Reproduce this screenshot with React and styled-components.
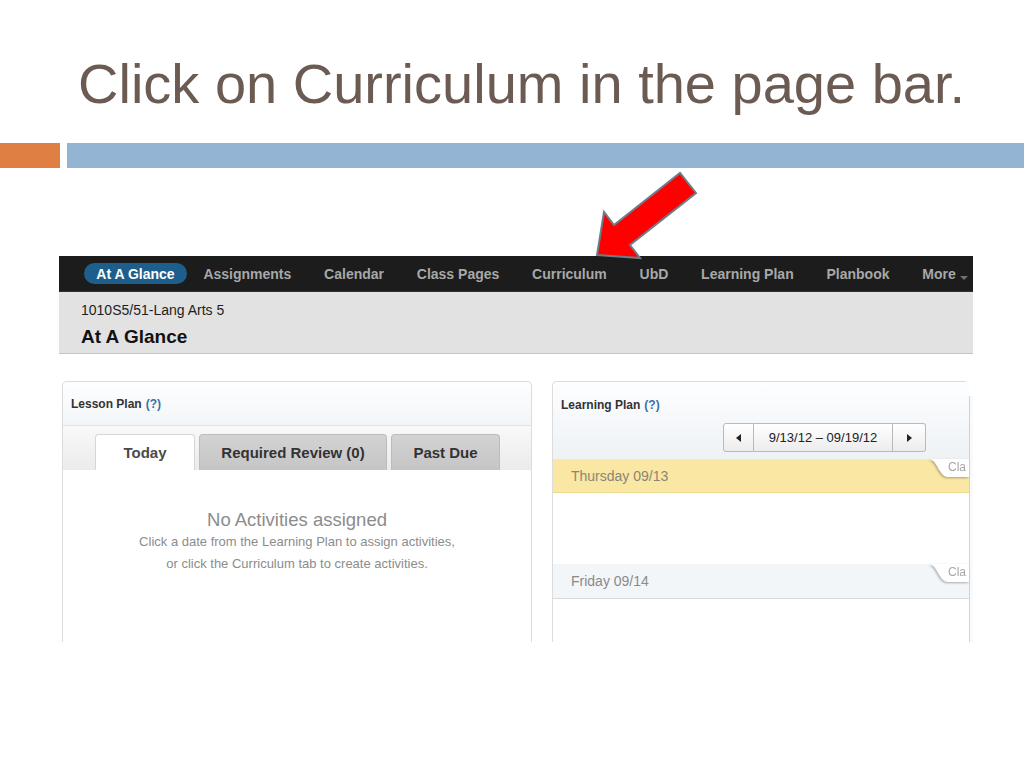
import styled, { createGlobalStyle, css } from 'styled-components';

const GlobalStyle = createGlobalStyle`
  html, body { margin: 0; padding: 0; background: #fff; }
  body { font-family: "Liberation Sans", Arial, sans-serif; }
  *, *::before, *::after { box-sizing: border-box; }
`;

const Slide = styled.div`
  position: relative;
  width: 1024px;
  height: 768px;
  overflow: hidden;
  background: #fff;
`;

const Title = styled.h1`
  margin: 0;
  padding: 56px 0 0 78px;
  font: 400 56px/56px "Liberation Sans", Arial, sans-serif;
  color: #6b5b52;
  white-space: nowrap;
`;

const Rule = styled.div`
  display: flex;
  gap: 7px;
  height: 25px;
  margin-top: 31px;
`;

const RuleBlock = styled.div`
  background: ${p => p.$color};
  flex: ${p => (p.$width ? `0 0 ${p.$width}px` : '1')};
`;

const Shot = styled.div`
  margin: 88px 0 0 59px;
  width: 914px;
  height: 386px;
  overflow: hidden;
  display: flex;
  flex-direction: column;
  font-family: "Liberation Sans", Arial, sans-serif;
  & > * { flex-shrink: 0; }
`;

const Nav = styled.nav`
  display: flex;
  align-items: center;
  height: 36px;
  padding-left: 25px;
  background: #1c1c1c;
  border-bottom: 1px solid #303030;
  overflow: hidden;
`;

const NavItem = styled.span`
  flex-shrink: 0;
  display: flex;
  align-items: center;
  padding: 0 16.4px;
  font-size: 14px;
  font-weight: 700;
  color: #a8a8a8;
  white-space: nowrap;

  ${p => p.$active && css`
    justify-content: center;
    width: 103px;
    height: 21px;
    padding: 0;
    border-radius: 11px;
    background: #1d5e8c;
    color: #fff;
  `}
`;

const Caret = styled.span`
  width: 0;
  height: 0;
  margin: 9px 0 0 4px;
  border-left: 4px solid transparent;
  border-right: 4px solid transparent;
  border-top: 4px solid #6f6f6f;
`;

const PageHead = styled.header`
  height: 62px;
  padding: 10px 0 0 22px;
  background: #e2e2e2;
  border-bottom: 1px solid #c4c4c4;
`;

const Crumb = styled.div`
  font-size: 14px;
  line-height: 16px;
  color: #1e1e1e;
`;

const PageTitle = styled.div`
  margin-top: 8px;
  font-size: 19px;
  font-weight: 700;
  line-height: 22px;
  color: #111;
`;

const Content = styled.div`
  flex: 1 0 auto;
  display: flex;
  padding: 27px 0 0 3px;
  background: #fff;
`;

const Panel = styled.section`
  display: flex;
  flex-direction: column;
  border: 1px solid #dcdcdc;
  border-bottom: none;
  border-radius: 5px 5px 0 0;
  & > * { flex-shrink: 0; }
  ${p => (p.$width ? css`flex: 0 0 ${p.$width}px; margin-right: 20px;` : css`flex: 1; border-right: none;`)}
`;

const PanelHead = styled.div`
  height: 44px;
  display: flex;
  align-items: center;
  padding-left: 8px;
  font-size: 12px;
  font-weight: 700;
  color: #333;
  background: linear-gradient(#fdfeff, #f3f6f8);
  border-bottom: 1px solid #dde3e8;
  border-radius: 5px 5px 0 0;
`;

const Help = styled.span`
  margin-left: 4px;
  color: #3b6ea8;
`;

const TabStrip = styled.div`
  height: 44px;
  display: flex;
  align-items: flex-end;
  gap: 4px;
  padding-left: 32px;
  background: linear-gradient(#f9f9f9, #ebebeb);
`;

const Tab = styled.div`
  width: ${p => p.$width}px;
  height: 36px;
  display: flex;
  align-items: center;
  justify-content: center;
  font-size: 15px;
  font-weight: 700;
  color: ${p => (p.$active ? '#4a4a4a' : '#333')};
  background: ${p => (p.$active ? '#fff' : 'linear-gradient(#d3d3d3, #c5c5c5)')};
  border: 1px solid ${p => (p.$active ? '#d6d6d6' : '#bcbcbc')};
  border-bottom: none;
  border-radius: 4px 4px 0 0;
`;

const Empty = styled.div`
  flex: 1 0 auto;
  padding-top: 39px;
  text-align: center;
  color: #8c8c8c;
  background: #fff;
`;

const EmptyTitle = styled.div`
  font-size: 18.5px;
  line-height: 22px;
`;

const EmptyText = styled.div`
  font-size: 13px;
  line-height: 22px;
`;

const PlanHead = styled.div`
  height: 77px;
  display: flex;
  flex-direction: column;
  padding: 16px 0 0 8px;
  background: linear-gradient(#fdfeff, #eef2f5);
  border-radius: 5px 0 0 0;
`;

const PlanTitle = styled.div`
  font-size: 12px;
  font-weight: 700;
  line-height: 14px;
  color: #333;
`;

const DateNav = styled.div`
  display: flex;
  height: 29px;
  margin: 11px 0 0 162px;
`;

const DateBtn = styled.div`
  width: ${p => p.$width}px;
  display: flex;
  align-items: center;
  justify-content: center;
  font-size: 13px;
  color: #222;
  background: linear-gradient(#ffffff, #ececec);
  border: 1px solid #b9b9b9;
  & + & { border-left: none; }
  &:first-child { border-radius: 3px 0 0 3px; }
  &:last-child { border-radius: 0 3px 3px 0; }
`;

const Tri = styled.span`
  width: 0;
  height: 0;
  border-top: 4px solid transparent;
  border-bottom: 4px solid transparent;
  ${p => (p.$dir === 'left'
    ? css`border-right: 5px solid #222;`
    : css`border-left: 5px solid #222;`)}
`;

const DayRow = styled.div`
  position: relative;
  height: ${p => p.$height}px;
  display: flex;
  align-items: center;
  padding-left: 18px;
  font-size: 14px;
  color: ${p => (p.$today ? '#8a8674' : '#8a8a8a')};
  background: ${p => (p.$today ? '#f9e7a3' : '#f2f6f8')};
  border-bottom: 1px solid ${p => (p.$today ? '#eed98e' : '#d4dade')};
`;

const DayGap = styled.div`
  height: ${p => p.$height}px;
  background: #fff;
`;

const ClassTabWrap = styled.div`
  position: absolute;
  top: 0;
  right: 0;
  filter: drop-shadow(-1px 1px 1px rgba(0, 0, 0, 0.3));
`;

const ClassTab = styled.div`
  width: 40px;
  height: 18px;
  padding-left: 19px;
  font-size: 12px;
  line-height: 17px;
  color: #a6a6a6;
  background: #fff;
  white-space: nowrap;
  overflow: hidden;
  clip-path: path('M0 0 C8 0 10 18 19 18 L40 18 L40 0 Z');
`;

const Scroll = styled.div`
  flex: 0 0 4px;
  margin-top: 15px;
  border-left: 1px solid #d2d2d2;
  background: #fafafa;
`;

const Arrow = styled.svg`
  position: absolute;
  left: 590px;
  top: 165px;
  width: 115px;
  height: 100px;
`;

const navItems = ['Assignments', 'Calendar', 'Class Pages', 'Curriculum', 'UbD', 'Learning Plan', 'Planbook'];

const App = () => {
  return (
    <Slide>
      <GlobalStyle />
      <Title>Click on Curriculum in the page bar.</Title>
      <Rule>
        <RuleBlock $color="#e07f44" $width={60} />
        <RuleBlock $color="#93b4d2" />
      </Rule>

      <Shot>
        <Nav>
          <NavItem $active>At A Glance</NavItem>
          {navItems.map(item => <NavItem key={item}>{item}</NavItem>)}
          <NavItem>More<Caret /></NavItem>
        </Nav>

        <PageHead>
          <Crumb>1010S5/51-Lang Arts 5</Crumb>
          <PageTitle>At A Glance</PageTitle>
        </PageHead>

        <Content>
          <Panel $width={470}>
            <PanelHead>Lesson Plan<Help>(?)</Help></PanelHead>
            <TabStrip>
              <Tab $width={100} $active>Today</Tab>
              <Tab $width={188}>Required Review (0)</Tab>
              <Tab $width={109}>Past Due</Tab>
            </TabStrip>
            <Empty>
              <EmptyTitle>No Activities assigned</EmptyTitle>
              <EmptyText>Click a date from the Learning Plan to assign activities,</EmptyText>
              <EmptyText>or click the Curriculum tab to create activities.</EmptyText>
            </Empty>
          </Panel>

          <Panel>
            <PlanHead>
              <PlanTitle>Learning Plan<Help>(?)</Help></PlanTitle>
              <DateNav>
                <DateBtn $width={31}><Tri $dir="left" /></DateBtn>
                <DateBtn $width={139}>9/13/12 – 09/19/12</DateBtn>
                <DateBtn $width={33}><Tri $dir="right" /></DateBtn>
              </DateNav>
            </PlanHead>
            <DayRow $today $height={34}>
              Thursday 09/13
              <ClassTabWrap><ClassTab>Cla</ClassTab></ClassTabWrap>
            </DayRow>
            <DayGap $height={71} />
            <DayRow $height={35}>
              Friday 09/14
              <ClassTabWrap><ClassTab>Cla</ClassTab></ClassTabWrap>
            </DayRow>
            <DayGap $height={60} />
          </Panel>
          <Scroll />
        </Content>
      </Shot>

      <Arrow viewBox="590 165 115 100">
        <polygon
          points="597,255 640,258 630,245 696,193 680,173 614,225 604,212"
          fill="#ff0000"
          stroke="#6e7c88"
          strokeWidth="2"
          strokeLinejoin="miter"
        />
      </Arrow>
    </Slide>
  );
};

export default App;
